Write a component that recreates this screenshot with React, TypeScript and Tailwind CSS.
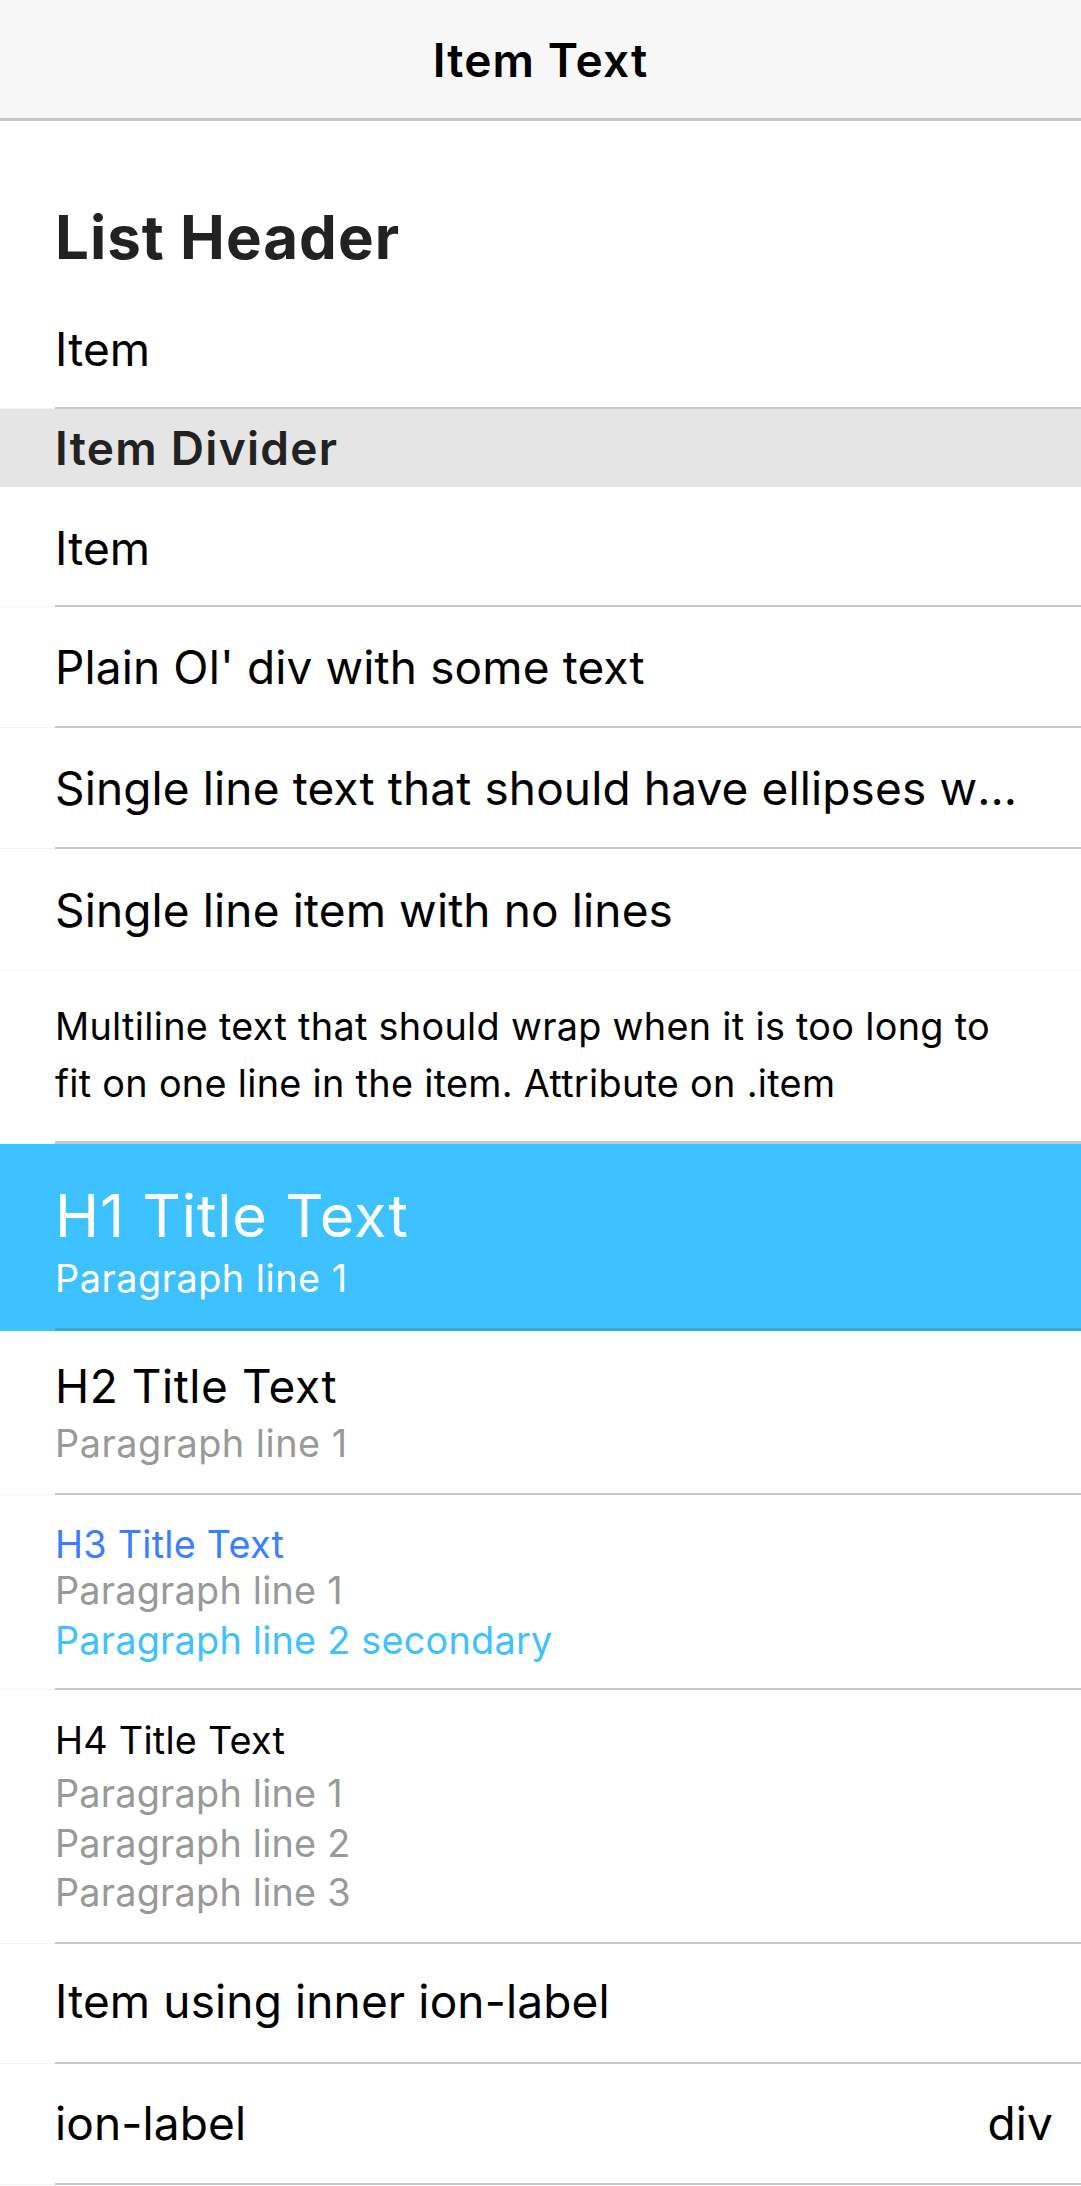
import React from "react";

function Line({ className = "" }: { className?: string }) {
  return (
    <div className={"flex h-[2px] " + className}>
      <div className="w-[55px] border-b border-[#f4f4f4]" />
      <div className="flex-1 bg-[#c8c7cc]" />
    </div>
  );
}

export default function App() {
  return (
    <div className="w-[1081px] min-h-[2186px] bg-white text-black font-['Inter',sans-serif] antialiased tracking-[0.008em]">
      {/* Toolbar */}
      <div className="h-[121px] bg-[#f7f7f7] border-b-[3px] border-[#c6c6c6] pt-[37px] flex justify-center">
        <span className="text-[46px] leading-[46px] font-semibold tracking-[0.024em]">Item Text</span>
      </div>

      {/* List header */}
      <div className="h-[167px] pt-[86px] pl-[55px]">
        <span className="text-[60px] leading-[60px] font-bold text-[#222222] tracking-[0.017em]">List Header</span>
      </div>

      {/* Item */}
      <div className="h-[119px] pt-[38px] pl-[55px] text-[46px] leading-[46px]">Item</div>
      <Line />

      {/* Divider */}
      <div className="h-[78px] bg-[#e5e5e5] pt-[16px] pl-[55px] text-[46px] leading-[46px] font-semibold text-[#222222] tracking-[0.028em]">
        Item Divider
      </div>

      {/* Item */}
      <div className="h-[118px] pt-[38px] pl-[55px] text-[46px] leading-[46px]">Item</div>
      <Line />

      {/* Plain div */}
      <div className="h-[119px] pt-[37px] pl-[55px] text-[46px] leading-[46px]">
        <div>Plain Ol' div with some text</div>
      </div>
      <Line />

      {/* Ellipsis */}
      <div className="h-[119px] pt-[30px] pl-[55px] pr-[49px] text-[46px] leading-[60px]">
        <div className="truncate">
          Single line text that should have ellipses when it is too long to fit on one line in the item
        </div>
      </div>
      <Line />

      {/* No lines */}
      <div className="h-[121px] pt-[38px] pl-[55px] text-[46px] leading-[46px]">Single line item with no lines</div>
      <div className="h-[1px] bg-[#f5f5f5]" />

      {/* Multiline */}
      <div className="h-[170px] pt-[27px] pl-[55px] pr-[40px] text-[37.8px] leading-[57px] tracking-[0.008em]">
        Multiline text that should wrap when it is too long to
        <br />
        fit on one line in the item. Attribute on .item
      </div>
      <div className="flex h-[3px]">
        <div className="w-[55px]" />
        <div className="flex-1 bg-[#c8c8c8]" />
      </div>

      {/* H1 secondary */}
      <div className="bg-[#3dc2ff] text-white">
        <div className="h-[184px] pt-[41px] pl-[55px]">
          <div className="text-[59.4px] leading-[60px] mb-[8px] tracking-[0.014em]">H1 Title Text</div>
          <div className="text-[37.8px] leading-[50px] tracking-[0.014em]">Paragraph line 1</div>
        </div>
        <div className="ml-[55px] h-[3px] bg-[#36abe0]" />
      </div>

      {/* H2 */}
      <div className="h-[162px] pt-[30px] pl-[55px]">
        <div className="text-[46px] leading-[50px] mb-[7px] tracking-[0.012em]">H2 Title Text</div>
        <div className="text-[37.8px] leading-[50px] text-[#999999] tracking-[0.014em]">Paragraph line 1</div>
      </div>
      <Line />

      {/* H3 */}
      <div className="h-[193px] pt-[28px] pl-[55px] tracking-[0.014em]">
        <div className="text-[37.8px] leading-[42px] text-[#3880ff]">H3 Title Text</div>
        <div className="text-[37.8px] leading-[50px] text-[#999999]">Paragraph line 1</div>
        <div className="text-[37.8px] leading-[50px] text-[#3dc2ff]">Paragraph line 2 secondary</div>
      </div>
      <Line />

      {/* H4 */}
      <div className="h-[252px] pt-[25px] pl-[55px] tracking-[0.014em]">
        <div className="text-[37.8px] leading-[50px] mb-[3px]">H4 Title Text</div>
        <div className="text-[37.8px] leading-[50px] text-[#999999]">Paragraph line 1</div>
        <div className="text-[37.8px] leading-[50px] text-[#999999]">Paragraph line 2</div>
        <div className="text-[37.8px] leading-[49px] text-[#999999]">Paragraph line 3</div>
      </div>
      <Line />

      {/* Inner ion-label */}
      <div className="h-[118px] pt-[34px] pl-[55px] text-[46px] leading-[46px]">
        <span>Item using inner ion-label</span>
      </div>
      <Line />

      {/* ion-label + div */}
      <div className="h-[119px] pt-[36px] pl-[55px] pr-[28px] flex justify-between text-[46px] leading-[46px]">
        <span>ion-label</span>
        <span>div</span>
      </div>
      <Line />
    </div>
  );
}
